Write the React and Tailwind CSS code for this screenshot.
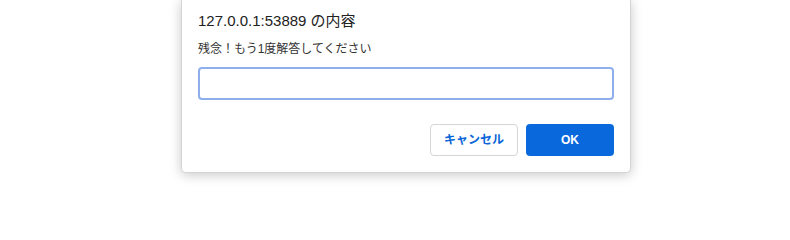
export default function App() {
  return (
    <div className="w-[790px] h-[200px] bg-white font-['Liberation_Sans','Noto_Sans_CJK_JP',sans-serif] overflow-hidden">
      <div className="ml-[181px] w-[450px] bg-white rounded-b-[5px] shadow-[0_2px_12px_rgba(0,0,0,0.22)] border-x border-b border-[#d4d4d4] pl-4 pr-[16px] pt-[12px] pb-[16px]">
        <div className="text-[15px] leading-[18px] text-[#222]">127.0.0.1:53889 の内容</div>
        <div className="mt-[12px] text-[12px] leading-[14px] text-[#333]">残念！もう1度解答してください</div>
        <input
          className="mt-[11px] block w-[416px] h-[33px] rounded-[4px] border-2 border-[#8db0ec] outline-none px-2 text-[13px]"
          type="text"
        />
        <div className="mt-[24px] flex justify-end gap-2">
          <button className="w-[88px] h-[32px] rounded-[4px] border border-[#d5d5d5] bg-white text-[12px] font-bold text-[#0a66d8]">
            キャンセル
          </button>
          <button className="w-[88px] h-[32px] rounded-[4px] bg-[#0a68dd] text-[12px] font-bold text-white">
            OK
          </button>
        </div>
      </div>
    </div>
  );
}
